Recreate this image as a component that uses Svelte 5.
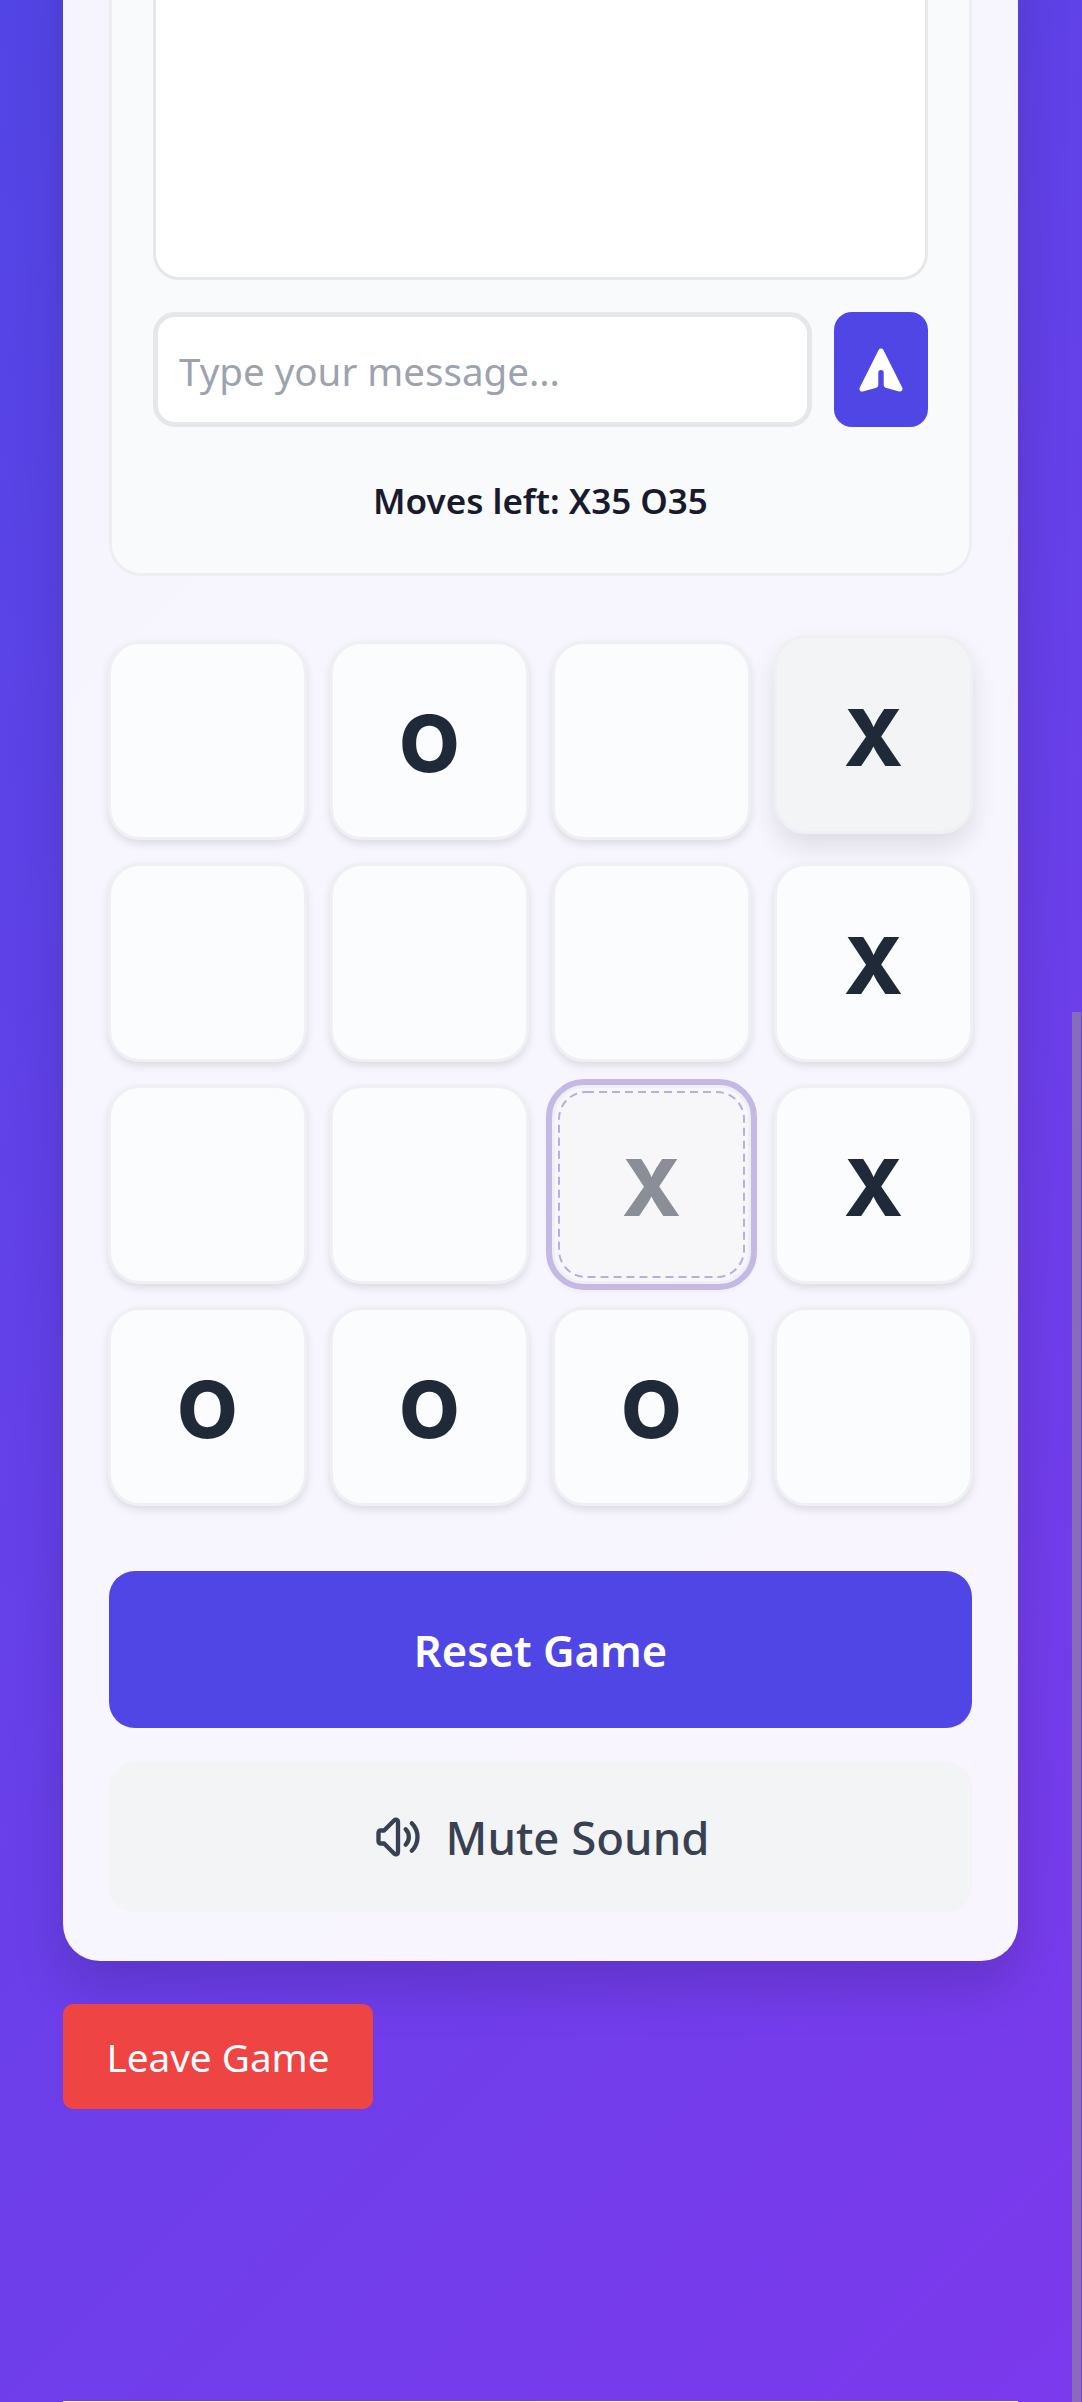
<script>
  const board = [
    '', 'O', '', 'X',
    '', '', '', 'X',
    '', '', 'X', 'X',
    'O', 'O', 'O', ''
  ];
  const hoverCell = 3;
  const lastMove = 10;
</script>

<div class="page">
  <div class="game-card">
    <section class="chat-panel">
      <div class="messages"></div>
      <div class="chat-input">
        <input type="text" placeholder="Type your message..." />
        <button class="send" aria-label="Send">
          <svg viewBox="0 0 20 20" fill="currentColor">
            <path d="M10.894 2.553a1 1 0 00-1.788 0l-7 14a1 1 0 001.169 1.409l5-1.429A1 1 0 009 15.571V11a1 1 0 112 0v4.571a1 1 0 00.725.962l5 1.428a1 1 0 001.17-1.408l-7-14z" />
          </svg>
        </button>
      </div>
      <p class="moves">Moves left: X35 O35</p>
    </section>

    <div class="board">
      {#each board as value, i}
        <button class="cell" class:hover={i === hoverCell} class:last={i === lastMove}>
          <span>{value}</span>
          {#if i === lastMove}
            <svg class="dash" viewBox="0 0 187 187">
              <rect x="1" y="1" width="185" height="185" rx="27" fill="none" stroke="#b9abec" stroke-width="2" stroke-dasharray="8 5" />
            </svg>
          {/if}
        </button>
      {/each}
    </div>

    <button class="reset">Reset Game</button>
    <button class="mute">
      <svg viewBox="0 0 24 24" fill="none" stroke="currentColor" stroke-width="2" stroke-linecap="round" stroke-linejoin="round">
        <path d="M15.536 8.464a5 5 0 010 7.072m2.828-9.9a9 9 0 010 12.728M5.586 15H4a1 1 0 01-1-1v-4a1 1 0 011-1h1.586l4.707-4.707C10.923 3.663 12 4.109 12 5v14c0 .891-1.077 1.337-1.707.707L5.586 15z" />
      </svg>
      Mute Sound
    </button>
  </div>

  <button class="leave">Leave Game</button>
  <div class="next-card"></div>
  <div class="scrollbar"></div>
</div>

<style>
  :global(body) {
    margin: 0;
  }

  .page {
    position: relative;
    height: 2402px;
    overflow: hidden;
    box-sizing: border-box;
    padding: 0 64px 0 63px;
    background: linear-gradient(135deg, #4f46e5 -8%, #7c3aed 100%);
    font-family: "Noto Sans", "Open Sans", sans-serif;
  }

  button {
    font-family: inherit;
    border: none;
    cursor: pointer;
  }

  .game-card {
    margin-top: -60px;
    padding: 0 46px 49px;
    background: rgba(255, 255, 255, 0.95);
    border-radius: 0 0 37px 37px;
    box-shadow: 0 26px 52px rgba(0, 0, 0, 0.15);
  }

  .chat-panel {
    box-sizing: border-box;
    height: 636px;
    padding: 0 41px;
    background: #f9fafb;
    border: 3px solid #eceef1;
    border-top: none;
    border-radius: 0 0 32px 32px;
  }

  .messages {
    height: 340px;
    background: #fff;
    border: 3px solid #e5e7eb;
    border-top: none;
    border-radius: 0 0 26px 26px;
    box-sizing: border-box;
  }

  .chat-input {
    display: flex;
    gap: 22px;
    margin-top: 32px;
  }

  input {
    flex: 1;
    min-width: 0;
    height: 115px;
    box-sizing: border-box;
    padding: 2px 21px 0;
    background: #fff;
    border: 5px solid #e5e7eb;
    border-radius: 22px;
    font-family: inherit;
    font-size: 38.5px;
    outline: none;
  }

  input::placeholder {
    color: #9ca3af;
    opacity: 1;
  }

  .send {
    display: flex;
    align-items: center;
    justify-content: center;
    width: 94px;
    height: 115px;
    padding: 0;
    background: #4f46e5;
    color: #fff;
    border-radius: 18px;
  }

  .send svg {
    width: 54px;
    height: 54px;
  }

  .moves {
    margin: 47px 0 0;
    text-align: center;
    font-size: 35px;
    line-height: 54px;
    font-weight: 600;
    color: #1a1a2e;
  }

  .board {
    display: grid;
    grid-template-columns: repeat(4, 199px);
    gap: 23px;
    margin: 65px 0 0 -1px;
  }

  .cell {
    display: flex;
    align-items: center;
    justify-content: center;
    position: relative;
    height: 199px;
    padding: 6px 0 0;
    background: #fbfcfe;
    border: 3px solid #eef0f3;
    border-radius: 32px;
    box-shadow: 0 4px 8px rgba(0, 0, 0, 0.11);
    color: #1f2937;
    font-family: Inter, "Noto Sans", sans-serif;
    font-size: 78px;
    font-weight: 800;
  }

  .cell.hover {
    transform: translateY(-6px);
    background: #f3f4f6;
    box-shadow: 0 13px 26px rgba(0, 0, 0, 0.1);
  }

  .cell.last {
    background: #f7f7f9;
    outline: 6px solid #c4b8e4;
    outline-offset: 0;
  }

  .cell.last span {
    opacity: 0.5;
  }

  .dash {
    position: absolute;
    top: 3px;
    left: 3px;
    width: 187px;
    height: 187px;
  }

  .reset,
  .mute {
    display: flex;
    align-items: center;
    justify-content: center;
    width: 100%;
    padding: 0;
  }

  .reset {
    height: 157px;
    margin-top: 65px;
    background: #4f46e5;
    color: #fff;
    border-radius: 26px;
    font-size: 43.5px;
    font-weight: 600;
  }

  .mute {
    gap: 22px;
    height: 150px;
    margin-top: 34px;
    background: #f3f4f6;
    color: #374151;
    border-radius: 26px;
    font-size: 45.5px;
    font-weight: 500;
  }

  .mute svg {
    width: 52px;
    height: 52px;
  }

  .leave {
    display: block;
    width: 310px;
    height: 105px;
    margin-top: 43px;
    padding: 0;
    background: #ef4444;
    color: #fff;
    border-radius: 10px;
    font-size: 38.7px;
  }

  .next-card {
    position: absolute;
    left: 63px;
    right: 64px;
    top: 2401px;
    height: 1px;
    background: #fff;
  }

  .scrollbar {
    position: absolute;
    top: 1012px;
    right: 1px;
    bottom: 0;
    width: 9px;
    background: rgba(150, 140, 150, 0.6);
  }
</style>
